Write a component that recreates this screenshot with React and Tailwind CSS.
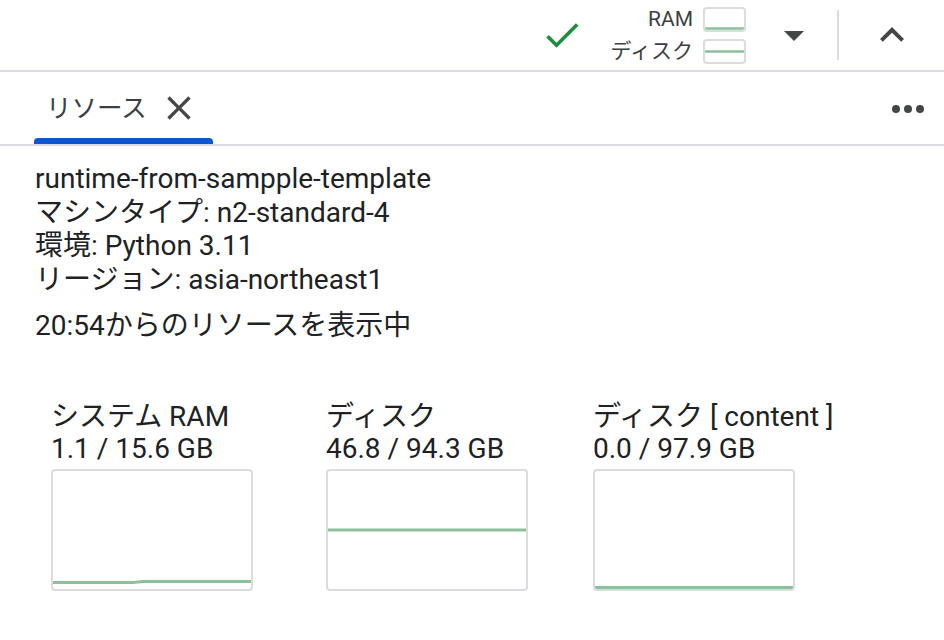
import React from "react";

const FONT = { fontFamily: "Roboto, 'Noto Sans CJK JP', sans-serif" };

function Check() {
  return (
    <svg width="44" height="44" viewBox="0 0 24 24" className="shrink-0">
      <path fill="#1e8e3e" d="M9 16.17L4.83 12l-1.42 1.41L9 19 21 7l-1.41-1.41z" />
    </svg>
  );
}

function LegendBox({ y }) {
  return (
    <div className="w-[43px] h-[25px] border-2 border-[#dadce0] rounded-[4px] overflow-hidden">
      <svg width="39" height="21" viewBox="0 0 39 21" className="block">
        <line x1="0" x2="39" y1={y} y2={y} stroke="#8cc09a" strokeWidth="2.5" />
      </svg>
    </div>
  );
}

function Chart({ points }) {
  return (
    <div className="w-[202px] h-[122px] border-2 border-[#dadce0] rounded-[4px] overflow-hidden mt-[4px]">
      <svg width="198" height="118" viewBox="0 0 198 118" className="block">
        <polyline points={points} fill="none" stroke="#8cc09a" strokeWidth="3" />
      </svg>
    </div>
  );
}

function Col({ title, value, points, className }) {
  return (
    <div className={"flex flex-col " + className}>
      <div className="text-[28px] leading-[32px] text-[#202124] whitespace-nowrap">{title}</div>
      <div className="text-[28px] leading-[32px] text-[#202124] whitespace-nowrap">{value}</div>
      <Chart points={points} />
    </div>
  );
}

export default function App() {
  return (
    <div className="w-[944px] h-[640px] bg-white overflow-hidden" style={FONT}>
      {/* Top bar */}
      <div className="h-[72px] border-b-2 border-[#dadce0] flex items-center justify-end pr-[28px]">
        <Check />
        <div className="ml-[26px] grid grid-cols-[auto_43px] gap-x-[10px] gap-y-[7px] items-center">
          <div className="text-[21px] leading-[25px] text-[#3c4043] text-right">RAM</div>
          <LegendBox y={19.5} />
          <div className="text-[21px] leading-[25px] text-[#3c4043] text-right">ディスク</div>
          <LegendBox y={10.5} />
        </div>
        <svg width="48" height="48" viewBox="0 0 24 24" className="ml-[24px] shrink-0">
          <path fill="#444746" d="M7 10l5 5 5-5z" />
        </svg>
        <div className="ml-[19px] w-[2px] h-[50px] bg-[#dadce0]" />
        <svg width="48" height="48" viewBox="0 0 24 24" className="ml-[29px] shrink-0">
          <path fill="#444746" d="M12 8l-6 6 1.41 1.41L12 10.83l4.59 4.58L18 14z" />
        </svg>
      </div>

      {/* Tab bar */}
      <div className="h-[74px] border-b-2 border-[#dadce0] flex items-stretch justify-between">
        <div className="ml-[34px] w-[179px] flex flex-col">
          <div className="flex-1 flex items-center pl-[12px] pt-[6px]">
            <span className="text-[25.5px] leading-[32px] text-[#3c4043]">リソース</span>
            <svg width="40" height="40" viewBox="0 0 24 24" className="ml-[12px] shrink-0">
              <path
                fill="#444746"
                d="M19 6.41L17.59 5 12 10.59 6.41 5 5 6.41 10.59 12 5 17.59 6.41 19 12 13.41 17.59 19 19 17.59 13.41 12z"
              />
            </svg>
          </div>
          <div className="h-[6px] bg-[#0b57d0] rounded-t-[4px]" />
        </div>
        <div className="flex items-center pr-[12px] pt-[2px]">
          <svg width="48" height="48" viewBox="0 0 24 24">
            <circle cx="6" cy="12" r="2" fill="#444746" />
            <circle cx="12" cy="12" r="2" fill="#444746" />
            <circle cx="18" cy="12" r="2" fill="#444746" />
          </svg>
        </div>
      </div>

      {/* Info */}
      <div className="pl-[35px] pt-[16px] text-[28px] leading-[33.5px] text-[#202124]">
        <div>runtime-from-sampple-template</div>
        <div>マシンタイプ: n2-standard-4</div>
        <div>環境: Python 3.11</div>
        <div>リージョン: asia-northeast1</div>
        <div className="mt-[13px]">20:54からのリソースを表示中</div>
      </div>

      {/* Charts */}
      <div className="flex items-start mt-[58px]">
        <Col
          className="ml-[51px] w-[202px]"
          title="システム RAM"
          value="1.1 / 15.6 GB"
          points="0,111.5 80,111.5 90,110.5 198,110.5"
        />
        <Col
          className="ml-[73px] w-[202px]"
          title="ディスク"
          value="46.8 / 94.3 GB"
          points="0,59 198,59"
        />
        <Col
          className="ml-[65px]"
          title="ディスク [ content ]"
          value="0.0 / 97.9 GB"
          points="0,116.5 198,116.5"
        />
      </div>
    </div>
  );
}
